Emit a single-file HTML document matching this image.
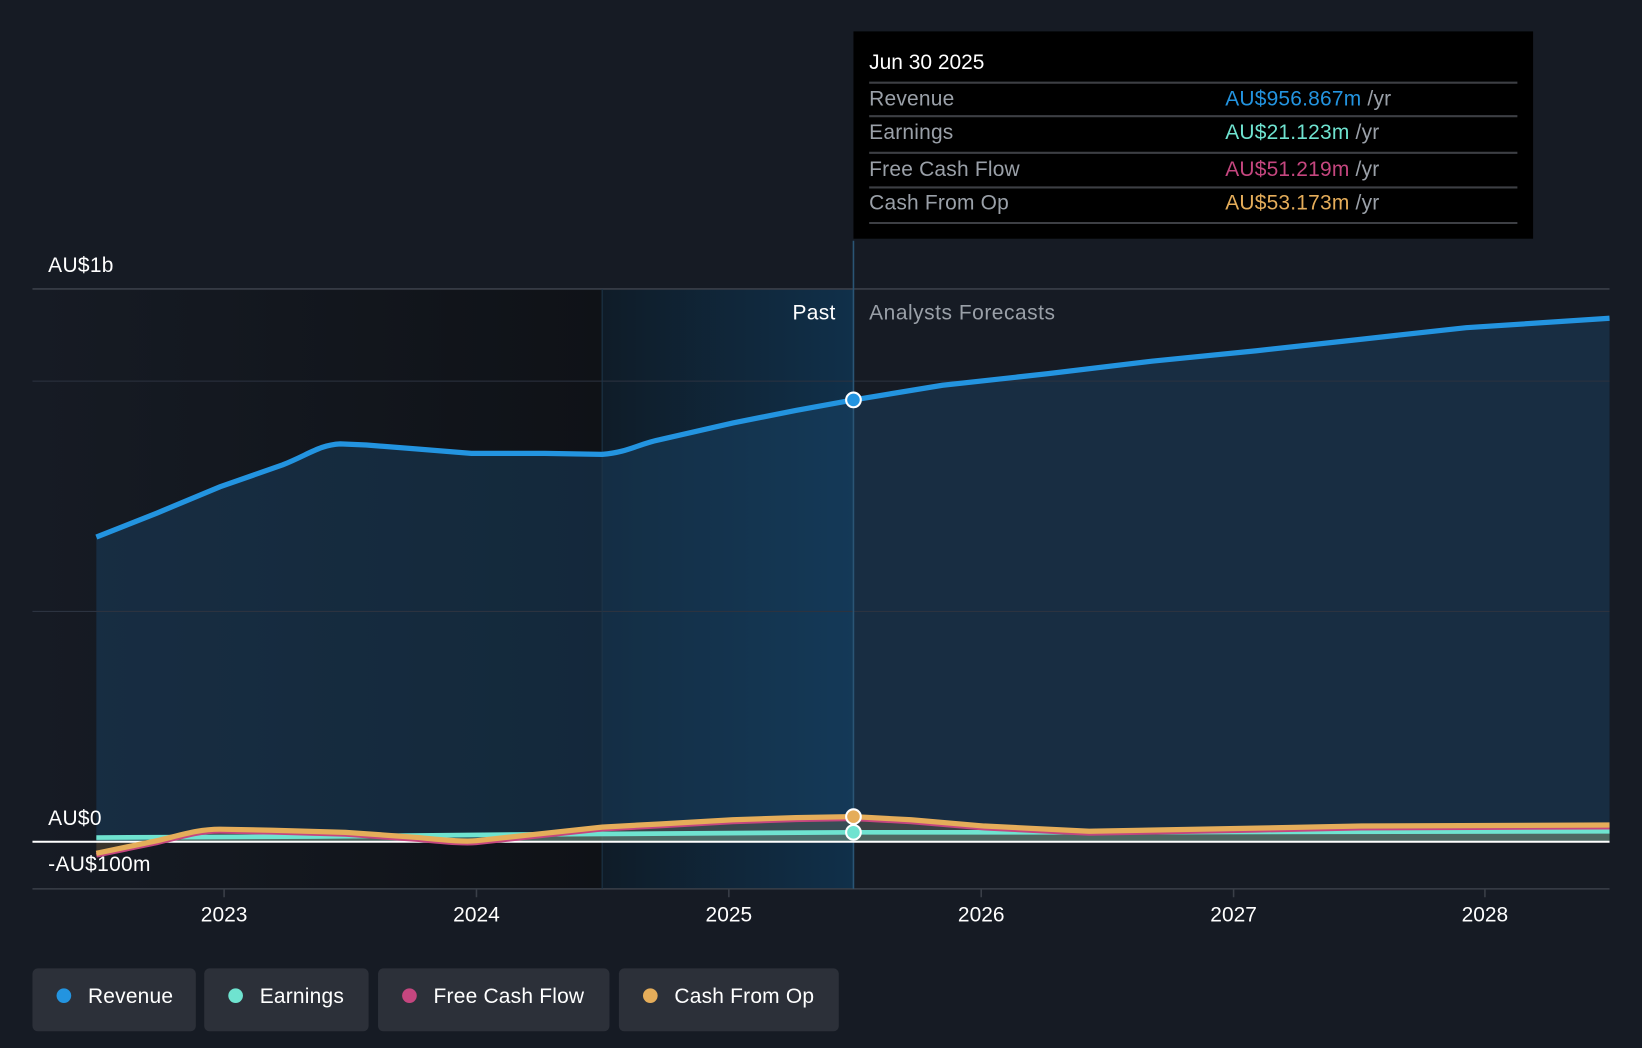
<!DOCTYPE html>
<html><head><meta charset="utf-8"><style>
html,body{margin:0;padding:0;background:#161b24;}
svg{display:block;font-family:"Liberation Sans",sans-serif;}
</style></head><body>
<svg width="1642" height="1048" viewBox="0 0 1568 1001" preserveAspectRatio="none">
<defs>
<linearGradient id="pastg" x1="0" x2="1" y1="0" y2="0">
<stop offset="0" stop-color="#161b24"/><stop offset="1" stop-color="#0f1217"/>
</linearGradient>
<linearGradient id="hl" x1="0" x2="1" y1="0" y2="0">
<stop offset="0" stop-color="#0f1c28"/><stop offset="1" stop-color="#10304a"/>
</linearGradient>
</defs>
<rect width="1568" height="1001" fill="#161b24"/>
<rect x="31" y="276" width="544" height="573" fill="url(#pastg)"/>
<rect x="575" y="276" width="240" height="573" fill="url(#hl)"/>
<path d="M92,513 L150,490 L210,465 L270,444 C295,434 305,425 325,424 L350,425 L400,429 L450,433 L520,433 L575,434 C600,432 610,424 630,420 L700,404 L760,392 L815,382 L900,368 L1000,357 L1100,345 L1200,335 L1300,324 L1400,313 L1537,304 L1537,804 L92,804 Z" fill="#1b4468" fill-opacity="0.45"/>
<line x1="31" x2="1537" y1="276" y2="276" stroke="#3a3f48" stroke-width="1.5"/>
<line x1="31" x2="1537" y1="364" y2="364" stroke="#2c3340" stroke-width="1"/>
<line x1="31" x2="1537" y1="584" y2="584" stroke="#2c3340" stroke-width="1"/>
<line x1="31" x2="1537" y1="849" y2="849" stroke="#3a3f48" stroke-width="1.5"/>
<line x1="575" x2="575" y1="276" y2="849" stroke="#1e3548" stroke-width="1"/>
<line x1="815" x2="815" y1="230" y2="849" stroke="#2a5575" stroke-width="1.5"/>
<path d="M92,800 L300,799 L500,797 L815,795 L1000,795 L1537,794 L1537,804 L92,804Z" fill="#6fe3d0" fill-opacity="0.25"/>
<path d="M92,815 L150,803 C175,797 190,792 210,792 L260,793 L330,795 L400,800 C430,803 445,804 455,803 L510,797 L575,790 L630,787 L700,783 L760,781 L815,780 L870,783 L940,789 L1040,794 L1200,791 L1300,789 L1537,788 L1537,804 L92,804Z" fill="#e5ad5a" fill-opacity="0.18"/>
<line x1="31" x2="1537" y1="804" y2="804" stroke="#ffffff" stroke-width="2"/>
<path d="M92,800 L300,799 L500,797 L815,795 L1000,795 L1537,794" fill="none" stroke="#6fe3d0" stroke-width="4.5"/>
<path d="M92,817 L150,805 C175,799 190,794 210,794 L260,795 L330,797 L400,802 C430,805 445,806 455,805 L510,799 L575,792 L630,789 L700,785 L760,783 L815,782 L870,785 L940,791 L1040,796 L1200,793 L1300,791 L1537,790" fill="none" stroke="#c5467f" stroke-width="4.5"/>
<path d="M92,815 L150,803 C175,797 190,792 210,792 L260,793 L330,795 L400,800 C430,803 445,804 455,803 L510,797 L575,790 L630,787 L700,783 L760,781 L815,780 L870,783 L940,789 L1040,794 L1200,791 L1300,789 L1537,788" fill="none" stroke="#e5ad5a" stroke-width="5"/>
<path d="M92,513 L150,490 L210,465 L270,444 C295,434 305,425 325,424 L350,425 L400,429 L450,433 L520,433 L575,434 C600,432 610,424 630,420 L700,404 L760,392 L815,382 L900,368 L1000,357 L1100,345 L1200,335 L1300,324 L1400,313 L1537,304" fill="none" stroke="#2394e0" stroke-width="5"/>
<circle cx="815" cy="382" r="7" fill="#2394e0" stroke="#fff" stroke-width="2"/>
<circle cx="815" cy="795" r="7" fill="#6fe3d0" stroke="#fff" stroke-width="2"/>
<circle cx="815" cy="780" r="7" fill="#e5ad5a" stroke="#fff" stroke-width="2"/>
<g font-size="20" letter-spacing="0.3">
<text x="46" y="260" fill="#fff">AU$1b</text>
<text x="46" y="788" fill="#fff">AU$0</text>
<text x="46" y="832" fill="#fff">-AU$100m</text>
<text x="798" y="305" fill="#fff" text-anchor="end">Past</text>
<text x="830" y="305" fill="#9aa0a8" letter-spacing="0.5">Analysts Forecasts</text>
</g>
<g stroke="#3a3f48" stroke-width="1.5">
<line x1="214" x2="214" y1="849" y2="857"/><line x1="455" x2="455" y1="849" y2="857"/><line x1="696" x2="696" y1="849" y2="857"/><line x1="937" x2="937" y1="849" y2="857"/><line x1="1178" x2="1178" y1="849" y2="857"/><line x1="1418" x2="1418" y1="849" y2="857"/>
</g>
<g fill="#fff" font-size="20" text-anchor="middle">
<text x="214" y="880">2023</text><text x="455" y="880">2024</text><text x="696" y="880">2025</text><text x="937" y="880">2026</text><text x="1178" y="880">2027</text><text x="1418" y="880">2028</text>
</g>
<rect x="815" y="30" width="649" height="198" fill="#000"/>
<text x="830" y="66" fill="#fff" font-size="20">Jun 30 2025</text>
<g stroke="#3d3f44" stroke-width="2">
<line x1="830" x2="1449" y1="79" y2="79"/><line x1="830" x2="1449" y1="111" y2="111"/><line x1="830" x2="1449" y1="146" y2="146"/><line x1="830" x2="1449" y1="179" y2="179"/><line x1="830" x2="1449" y1="213" y2="213"/>
</g>
<g font-size="20" fill="#9aa0a8" letter-spacing="0.2">
<text x="830" y="101">Revenue</text><text x="830" y="133">Earnings</text><text x="830" y="168">Free Cash Flow</text><text x="830" y="200">Cash From Op</text>
<text x="1170" y="101"><tspan fill="#2394e0">AU$956.867m</tspan> /yr</text>
<text x="1170" y="133"><tspan fill="#6fe3d0">AU$21.123m</tspan> /yr</text>
<text x="1170" y="168"><tspan fill="#c5467f">AU$51.219m</tspan> /yr</text>
<text x="1170" y="200"><tspan fill="#e5ad5a">AU$53.173m</tspan> /yr</text>
</g>
<g fill="#2c3039">
<rect x="31" y="925" width="156" height="60" rx="5"/><rect x="195" y="925" width="157" height="60" rx="5"/><rect x="361" y="925" width="221" height="60" rx="5"/><rect x="591" y="925" width="210" height="60" rx="5"/>
</g>
<circle cx="61" cy="951" r="7" fill="#2394e0"/><circle cx="225" cy="951" r="7" fill="#6fe3d0"/><circle cx="391" cy="951" r="7" fill="#c5467f"/><circle cx="621" cy="951" r="7" fill="#e5ad5a"/>
<g fill="#fff" font-size="20" letter-spacing="0.2">
<text x="84" y="958">Revenue</text><text x="248" y="958">Earnings</text><text x="414" y="958">Free Cash Flow</text><text x="644" y="958">Cash From Op</text>
</g>
</svg>
</body></html>
